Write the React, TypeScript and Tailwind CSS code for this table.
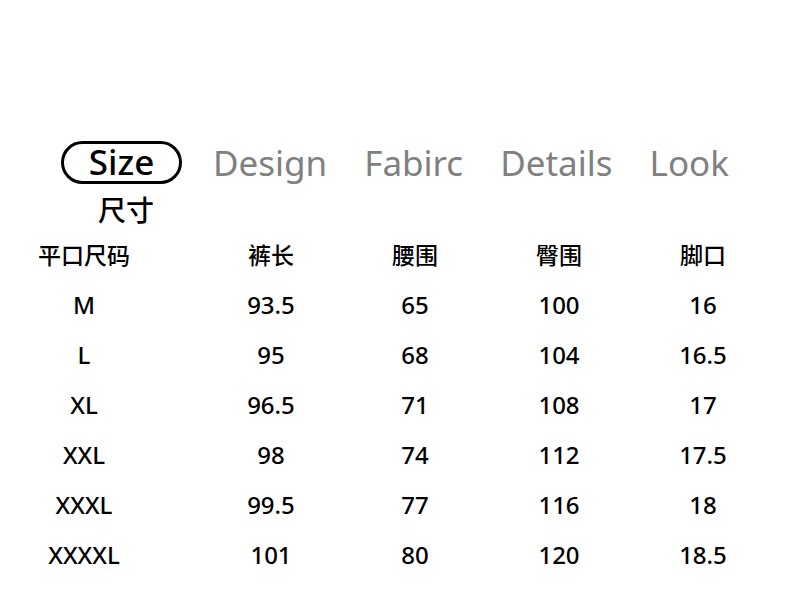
import React from 'react';

const font = { fontFamily: '"Noto Sans", "Noto Sans CJK SC", sans-serif' };

const headers = ['平口尺码', '裤长', '腰围', '臀围', '脚口'];

const rows = [
  ['M', '93.5', '65', '100', '16'],
  ['L', '95', '68', '104', '16.5'],
  ['XL', '96.5', '71', '108', '17'],
  ['XXL', '98', '74', '112', '17.5'],
  ['XXXL', '99.5', '77', '116', '18'],
  ['XXXXL', '101', '80', '120', '18.5'],
];

const Row = ({ cells, className }: { cells: string[]; className?: string }) => (
  <div className={`flex h-[50px] items-center pl-[12px] ${className ?? ''}`}>
    {cells.map((c, i) => (
      <div key={i} className={`w-[144px] text-center ${i === 0 ? 'mr-[43px]' : ''}`}>
        {c}
      </div>
    ))}
  </div>
);

export default function App() {
  return (
    <div style={font} className="w-[790px] h-[608px] bg-white text-black overflow-hidden">
      <div className="pt-[141px] pl-[61px] flex items-center">
        <div className="h-[43px] w-[121px] rounded-full border-[3px] border-black flex items-center justify-center text-[35px] font-medium leading-none">
          <span className="-mt-[2px]">Size</span>
        </div>
        <div className="flex items-center gap-[37px] ml-[31px] text-[35px] leading-none text-[#808080]">
          <span>Design</span>
          <span>Fabirc</span>
          <span>Details</span>
          <span>Look</span>
        </div>
      </div>
      <div className="pl-[98px] mt-[9px] text-[28px] font-medium leading-[34px]">尺寸</div>
      <div className="mt-[3px] font-medium leading-none">
        <Row cells={headers} className="text-[23px]" />
        {rows.map((r, i) => (
          <Row key={i} cells={r} className="text-[24px]" />
        ))}
      </div>
    </div>
  );
}
